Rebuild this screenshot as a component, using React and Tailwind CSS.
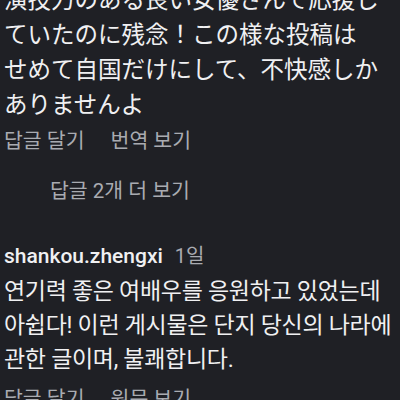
import React from 'react';

const jp = '"Noto Sans CJK JP", "Noto Sans", sans-serif';
const kr = 'Roboto, "Noto Sans CJK KR", sans-serif';

const ActionRow = ({ left, right }) => (
  <div className="flex gap-[26px] text-[20.5px] leading-[24px] text-[#a9abb1]">
    <span>{left}</span>
    <span>{right}</span>
  </div>
);

const App = () => {
  return (
    <div className="w-[400px] h-[400px] overflow-hidden bg-[#1f2025] pl-[4px]" style={{ fontFamily: kr }}>
      <p
        className="mt-[-19px] text-[23.5px] leading-[35px] text-[#f0f0f2] whitespace-nowrap"
        style={{ fontFamily: jp }}
      >
        演技力のある良い女優さんで応援し<br />
        ていたのに残念！この様な投稿は<br />
        せめて自国だけにして、不快感しか<br />
        ありませんよ
      </p>

      <div className="mt-[8px]">
        <ActionRow left="답글 달기" right="번역 보기" />
      </div>

      <div className="mt-[26px] pl-[46px] text-[20.5px] leading-[24px] text-[#a9abb1]">
        답글 2개 더 보기
      </div>

      <div className="mt-[38px] flex items-baseline gap-[12px] leading-[30px]">
        <span className="text-[21px] font-medium text-[#f0f0f2]">shankou.zhengxi</span>
        <span className="text-[20px] text-[#a9abb1]">1일</span>
      </div>

      <p className="mt-[4px] text-[23px] leading-[34px] text-[#f0f0f2] whitespace-nowrap tracking-[-0.3px]">
        연기력 좋은 여배우를 응원하고 있었는데<br />
        아쉽다! 이런 게시물은 단지 당신의 나라에<br />
        관한 글이며, 불쾌합니다.
      </p>

      <div className="mt-[10px]">
        <ActionRow left="답글 달기" right="원문 보기" />
      </div>
    </div>
  );
};

export default App;
